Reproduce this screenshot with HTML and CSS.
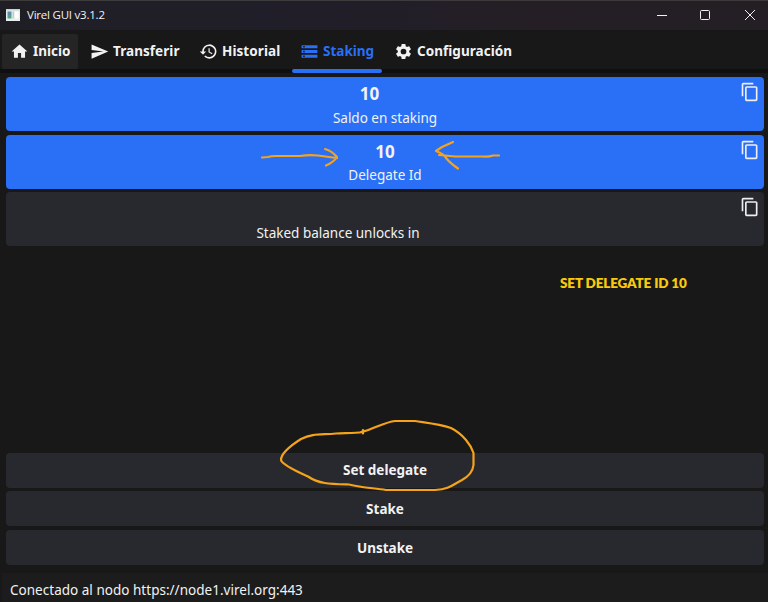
FILE: index.html
```html
<!DOCTYPE html>
<html lang="es">
<head>
<meta charset="utf-8">
<title>Virel GUI v3.1.2</title>
<link rel="stylesheet" href="styles.css">
</head>
<body>
<svg class="defs" aria-hidden="true">
  <symbol id="copy" viewBox="0 0 24 24"><path d="M16 1H4c-1.100 0-2 .9-2 2v14h2V3h12V1zm3 4H8c-1.100 0-2 .9-2 2v14c0 1.100.9 2 2 2h11c1.100 0 2-.9 2-2V7c0-1.100-.9-2-2-2zm0 16H8V7h11v14z"/></symbol>
</svg>
<div class="window">
  <header class="titlebar">
    <svg class="app-icon" viewBox="0 0 14 12"><path fill="#e9eeee" d="M0 0h14v12H0z"/><path fill="#c4d4d8" d="M0 0h14v1.500H0z"/><path fill="#5c8fa6" d="M1.500 2.500h4V6h-4z"/><path fill="#57a287" d="M1.500 6h4v3.500h-4z"/><path fill="#b5d5cb" d="M6.500 2.500H8v7H6.500z"/><path fill="#fff" d="M9 2.500h3.500v7H9z"/></svg>
    <span class="title">Virel GUI v3.1.2</span>
    <svg class="controls" viewBox="0 0 104 14" fill="none" stroke="#f2f0f2"><path d="M2 7.500h10"/><rect x="45.500" y="2.500" width="9" height="9" rx="1"/><path d="M90 2l10 10M100 2L90 12"/></svg>
  </header>
  <nav class="tabs">
    <a class="tab home"><svg viewBox="0 0 24 24"><path d="M10 20v-6h4v6h5v-8h3L12 3 2 12h3v8z"/></svg><span>Inicio</span></a>
    <a class="tab send"><svg viewBox="0 0 24 24"><path d="M2.010 21L23 12 2.010 3 2 10l15 2-15 2z"/></svg><span>Transferir</span></a>
    <a class="tab history"><svg viewBox="0 0 24 24"><path d="M13 3a9 9 0 0 0-9 9H1l3.890 3.890.07.14L9 12H6a7 7 0 1 1 2.060 4.940l-1.420 1.420A9 9 0 1 0 13 3zm-1 5v5l4.280 2.540.72-1.210-3.500-2.080V8H12z"/></svg><span>Historial</span></a>
    <a class="tab staking"><svg viewBox="0 0 24 24"><path fill-rule="evenodd" d="M2 20h20v-4H2v4zm2-3h2v2H4v-2zM2 4v4h20V4H2zm4 3H4V5h2v2zm-4 7h20v-4H2v4zm2-3h2v2H4v-2z"/></svg><span>Staking</span></a>
    <a class="tab config"><svg viewBox="0 0 24 24"><path d="M19.140 12.940c.04-.3.060-.61.060-.94 0-.32-.02-.64-.07-.94l2.030-1.580c.18-.14.230-.41.120-.61l-1.920-3.320c-.12-.22-.37-.29-.59-.22l-2.390.960c-.5-.38-1.030-.7-1.620-.94l-.36-2.540c-.04-.24-.24-.41-.48-.41h-3.840c-.24 0-.43.170-.47.410l-.36 2.540c-.59.240-1.130.570-1.620.940l-2.390-.96c-.22-.08-.47 0-.59.220L2.740 8.870c-.12.210-.08.470.120.610l2.030 1.580c-.05.300-.09.630-.09.940s.02.640.070.940l-2.030 1.580c-.18.140-.23.410-.12.610l1.920 3.320c.12.220.370.290.590.220l2.390-.96c.5.380 1.030.700 1.620.940l.36 2.540c.05.240.240.410.480.410h3.840c.24 0 .44-.17.470-.41l.36-2.540c.59-.24 1.130-.56 1.620-.94l2.390.960c.22.080.470 0 .59-.22l1.920-3.320c.12-.22.070-.47-.12-.61l-2.010-1.580zM12 15.600A3.600 3.600 0 1 1 12 8.400a3.600 3.600 0 0 1 0 7.200z"/></svg><span>Configuración</span></a>
  </nav>
  <main class="content">
    <section class="card blue first"><b>10</b><span>Saldo en staking</span><svg class="copy"><use href="#copy"/></svg></section>
    <section class="card blue second"><b>10</b><span>Delegate Id</span><svg class="copy"><use href="#copy"/></svg></section>
    <section class="card unlock"><b>&nbsp;</b><span>Staked balance unlocks in</span><svg class="copy"><use href="#copy"/></svg></section>
    <div class="actions">
      <button>Set delegate</button>
      <button>Stake</button>
      <button>Unstake</button>
    </div>
  </main>
  <footer class="status"><span>Conectado al nodo https://node1.virel.org:443</span></footer>
  <svg class="ink" viewBox="0 0 768 602">
    <path d="M262 157.500L268 157Q271 156 276 156H300Q309 154.500 318 155.500L329 157L337 158M325 149Q332 151 337 157Q334 162 326 165.500"/>
    <path d="M499 155.500L493 155.500Q489 157 482 156.500H455L439 155M453 142L442 147L436 151Q444 154 446 158Q450 163 458 168.500"/>
    <path d="M363 433.500V430M361 432L364 431M362 432C356 433.500 345 433 336 433.500C322 435 313 433 301 439C290 446 281 453 281 460C282 465 298 472 308 476.500C319 484 330 484 349 484.500C363 488 375 488 386 490H435C450 489 454 484 462 480C471 475 473 470 473.500 465V453C471 445 463 434 451 428C439 424 428 423 415 421H395C385 422 376 428 362 432"/>
  </svg>
  <p class="note">SET DELEGATE ID 10</p>
</div>
</body>
</html>
```
FILE: styles.css
```css
* { box-sizing: border-box; }
body { margin: 0; background: #181818; }
.defs { position: absolute; width: 0; height: 0; }
.window {
  position: relative;
  display: flex;
  flex-direction: column;
  width: 768px;
  height: 602px;
  overflow: hidden;
  background: #181818;
  color: #f2f2f3;
  font: 13.500px/18px "Noto Sans", sans-serif;
}
.titlebar {
  display: flex;
  align-items: center;
  height: 30px;
  flex: none;
  padding: 0 9px 2px 6px;
  border-top: 1px solid #3c3a3b;
  background: linear-gradient(90deg, #201e25, #211e29 45%, #251e25 70%, #241f25);
}
.app-icon { width: 14px; height: 12px; }
.title { margin-left: 7px; font: 11.500px/16px "Open Sans", sans-serif; letter-spacing: -.22px; }
.controls { width: 104px; height: 14px; margin-left: auto; }
.tabs {
  display: flex;
  flex: none;
  height: 43px;
  padding: 4px 0 0 2px;
  gap: 4px;
  background: linear-gradient(#181818 39px, #0f0f0f 39px);
}
.tab {
  position: relative;
  display: flex;
  align-items: center;
  height: 35px;
  padding: 0 0 1px 8px;
  gap: 4px;
  font-weight: 700;
}
.tab svg { width: 19px; height: 19px; flex: none; fill: currentColor; }
.tab span { white-space: nowrap; }
.home { width: 76px; border-radius: 2px; background: #252525; }
.send { width: 105px; letter-spacing: .06px; }
.history { width: 97px; letter-spacing: .07px; }
.staking { width: 90px; color: #2970f6; }
.staking::after {
  content: "";
  position: absolute;
  left: 0;
  right: 0;
  top: 35px;
  height: 4px;
  border-radius: 2px;
  background: #2970f6;
}
.config { width: 134px; letter-spacing: .04px; }
.content { display: flex; flex-direction: column; flex: 1; gap: 3.600px; padding: 4px 4px 8px 6px; }
.card {
  position: relative;
  height: 54px;
  flex: none;
  border-radius: 4px;
  background: #28292e;
  text-align: center;
}
.blue { background: #2970f6; }
.card b { display: block; padding-top: 6px; font-size: 17px; line-height: 22px; }
.card span { display: block; margin-top: 4px; }
.first b { margin-right: 31px; }
.second span { margin-top: 3px; }
.unlock span { margin-right: 94px; }
.copy { position: absolute; top: 5px; right: 4px; width: 20px; height: 20px; fill: #eeeef1; }
.actions { display: flex; flex-direction: column; gap: 3.600px; margin-top: auto; }
button {
  height: 35px;
  padding: 0;
  border: 0;
  border-radius: 4px;
  background: #28292e;
  color: #f2f2f3;
  font: 700 13.500px/18px "Noto Sans", sans-serif;
}
.status { flex: none; height: 29px; margin-left: 2px; padding: 8px 8px 0; background: #1c1c1c; letter-spacing: .02px; }
.ink { position: absolute; inset: 0; fill: none; stroke: #f5a31b; stroke-width: 2.200; stroke-linecap: round; stroke-linejoin: round; }
.note {
  position: absolute;
  left: 560px;
  top: 274px;
  margin: 0;
  color: #f9c910;
  font: 800 13.500px/18px Lato, sans-serif;
  letter-spacing: -.15px;
  white-space: nowrap;
}
```
